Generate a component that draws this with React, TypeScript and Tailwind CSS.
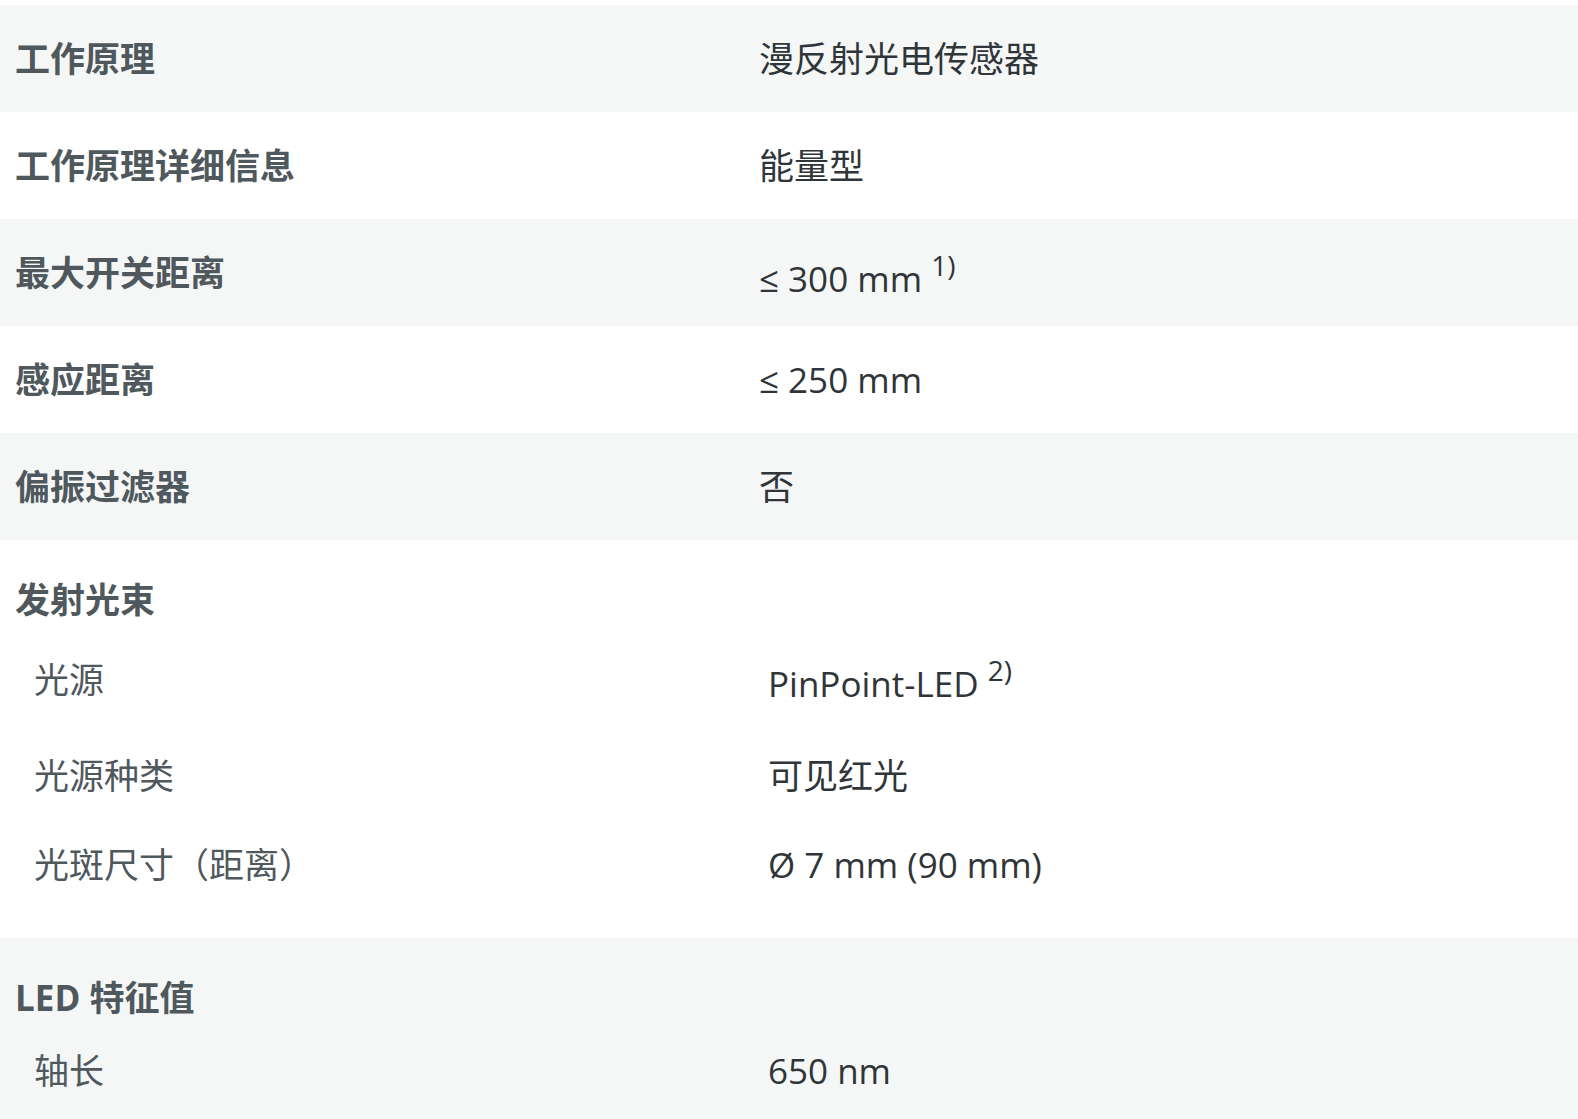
const font = { fontFamily: '"Open Sans", "Noto Sans CJK SC", sans-serif' }

type Row = { label: string; value: string; note?: string }

const mainRows: Row[] = [
  { label: '工作原理', value: '漫反射光电传感器' },
  { label: '工作原理详细信息', value: '能量型' },
  { label: '最大开关距离', value: '≤ 300 mm', note: '1)' },
  { label: '感应距离', value: '≤ 250 mm' },
  { label: '偏振过滤器', value: '否' },
]

const beamRows: Row[] = [
  { label: '光源', value: 'PinPoint-LED', note: '2)' },
  { label: '光源种类', value: '可见红光' },
  { label: '光斑尺寸（距离）', value: 'Ø 7 mm (90 mm)' },
]

function Note({ text }: { text: string }) {
  return (
    <>
      {' '}
      <span className="relative -top-[16px] text-[28px] leading-none">{text}</span>
    </>
  )
}

function SubRow({ row, className }: { row: Row; className: string }) {
  return (
    <div className={`grid grid-cols-[734px_1fr] items-center pl-[34px] ${className}`}>
      <div className="text-[#4f585d]">{row.label}</div>
      <div className={`text-[#2f3538] ${row.note ? 'pt-[8px]' : ''}`}>
        {row.value}
        {row.note && <Note text={row.note} />}
      </div>
    </div>
  )
}

export default function App() {
  return (
    <div className="min-h-screen bg-white pt-[5px] text-[35px] leading-[1.4]" style={font}>
      {/* main properties */}
      {mainRows.map((row, i) => (
        <div
          key={row.label}
          className={`grid h-[107px] grid-cols-[744px_1fr] items-center px-[15px] ${
            i % 2 === 0 ? 'bg-[#f5f7f7]' : 'bg-white'
          }`}
        >
          <div className="font-bold text-[#4f585d]">{row.label}</div>
          <div className={`text-[#2f3538] ${row.note ? 'pt-[12px]' : ''}`}>
            {row.value}
            {row.note && <Note text={row.note} />}
          </div>
        </div>
      ))}

      {/* 发射光束 */}
      <section className="bg-white pt-[31px] pb-[29px]">
        <div className="flex h-[56px] items-center px-[15px] font-bold text-[#4f585d]">发射光束</div>
        <SubRow row={beamRows[0]} className="h-[104px]" />
        <SubRow row={beamRows[1]} className="h-[89px]" />
        <SubRow row={beamRows[2]} className="h-[89px]" />
      </section>

      {/* LED 特征值 */}
      <section className="bg-[#f5f7f7] pt-[31px] pb-[29px]">
        <div className="flex h-[56px] items-center px-[15px] font-bold text-[#4f585d]">LED 特征值</div>
        <SubRow row={{ label: '轴长', value: '650 nm' }} className="h-[91px]" />
      </section>
    </div>
  )
}
